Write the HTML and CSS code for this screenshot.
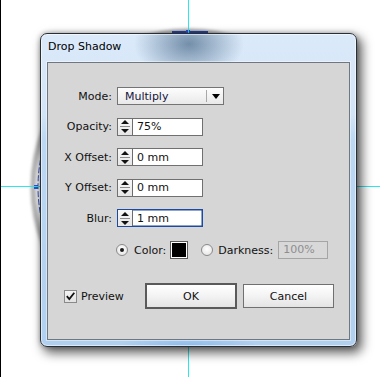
FILE: index.html
```html
<!DOCTYPE html>
<html>
<head>
<meta charset="utf-8">
<link rel="stylesheet" href="styles.css">
</head>
<body>
<div class="stage">
  <svg class="backdrop" width="380" height="377" viewBox="0 0 380 377">
    <defs>
      <filter id="soft" x="-20%" y="-20%" width="140%" height="140%">
        <feGaussianBlur stdDeviation="1.6"/>
      </filter>
    </defs>
    <circle cx="189" cy="187" r="156" fill="none" stroke="#b4b4b4" stroke-width="5" filter="url(#soft)"/>
    <circle cx="189" cy="187" r="151" fill="none" stroke="#2f52d2" stroke-width="1" stroke-dasharray="6 2"/>
    <rect x="172" y="31" width="36" height="2" fill="#2a44a6"/>
    <rect x="186" y="30" width="4" height="4" fill="#2f52d2"/>
    <rect x="34" y="185" width="4" height="4" fill="#2f52d2"/>
    <line x1="188.5" y1="0" x2="188.5" y2="377" stroke="#2ee6ee" stroke-width="1"/>
    <line x1="0" y1="186.5" x2="380" y2="186.5" stroke="#2ee6ee" stroke-width="1"/>
  </svg>

  <div class="dialog">
    <div class="title">Drop Shadow</div>
    <div class="client">
      <div class="fields">
        <span class="lbl">Mode:</span>
        <div class="select">
          <span class="sel-text">Multiply</span>
          <span class="sel-btn"><i class="tri-down"></i></span>
        </div>

        <span class="lbl">Opacity:</span>
        <div class="spin">
          <span class="spin-btns"><i class="up"></i><i class="sep"></i><i class="down"></i></span>
          <span class="val">75%</span>
        </div>

        <span class="lbl">X Offset:</span>
        <div class="spin">
          <span class="spin-btns"><i class="up"></i><i class="sep"></i><i class="down"></i></span>
          <span class="val">0 mm</span>
        </div>

        <span class="lbl">Y Offset:</span>
        <div class="spin">
          <span class="spin-btns"><i class="up"></i><i class="sep"></i><i class="down"></i></span>
          <span class="val">0 mm</span>
        </div>

        <span class="lbl">Blur:</span>
        <div class="spin focus">
          <span class="spin-btns"><i class="up"></i><i class="sep"></i><i class="down"></i></span>
          <span class="val">1 mm</span>
        </div>
      </div>

      <div class="color-row">
        <span class="radio checked"></span>
        <span class="opt-lbl">Color:</span>
        <span class="swatch"></span>
        <span class="radio second"></span>
        <span class="opt-lbl">Darkness:</span>
        <span class="disabled-input">100%</span>
      </div>

      <div class="actions">
        <span class="check">
          <svg width="11" height="11" viewBox="0 0 11 11"><path d="M1.8 5.2 L4.3 8 L9.3 1.8" fill="none" stroke="#111" stroke-width="1.8"/></svg>
        </span>
        <span class="check-lbl">Preview</span>
        <span class="btn ok">OK</span>
        <span class="btn cancel">Cancel</span>
      </div>
    </div>
  </div>
</div>
</body>
</html>
```

FILE: styles.css
```css
* { box-sizing: border-box; }

html, body {
  margin: 0;
  padding: 0;
  background: #fff;
  overflow: hidden;
}

body {
  font-family: "DejaVu Sans", "Liberation Sans", sans-serif;
  font-size: 11px;
  color: #111;
}

.stage {
  position: relative;
  width: 380px;
  height: 377px;
  background: #fff;
  overflow: hidden;
}

.stage::after {
  content: "";
  position: absolute;
  left: 0;
  top: -1px;
  width: 380px;
  height: 378px;
  border: 1px solid #000;
  pointer-events: none;
}

.backdrop {
  position: absolute;
  left: 0;
  top: 0;
}

.dialog {
  position: absolute;
  left: 40px;
  top: 33px;
  width: 317px;
  height: 314px;
  border: 1px solid #2a2f36;
  border-radius: 7px;
  background:
    radial-gradient(ellipse 55px 36px at 148px 10px, rgba(72, 104, 136, 0.7), rgba(72, 104, 136, 0) 100%),
    radial-gradient(ellipse 70px 10px at 148px 100%, rgba(110, 170, 230, 0.55), rgba(110, 170, 230, 0) 100%),
    linear-gradient(to bottom, #dbeafa 0%, #d2e4f7 26%, #bcd8f3 34%, #b1cfef 100%);
  box-shadow:
    inset 0 0 0 1px rgba(255, 255, 255, 0.55),
    0 0 5px rgba(0, 0, 0, 0.3),
    4px 5px 11px 1px rgba(0, 0, 0, 0.62);
  display: flex;
  flex-direction: column;
  padding: 0 6px 6px 6px;
}

.title {
  height: 28px;
  line-height: 26px;
  padding-left: 1px;
  color: #000;
  font-size: 11px;
}

.client {
  flex: 1;
  border: 1px solid #6f7780;
  background: #d6d6d6;
  box-shadow: 0 0 0 1px rgba(255, 255, 255, 0.45);
  padding-top: 24px;
}

.fields {
  display: grid;
  grid-template-columns: 64px auto;
  column-gap: 5px;
  row-gap: 12.5px;
  align-items: center;
  justify-items: start;
}

.lbl {
  justify-self: end;
  white-space: nowrap;
  color: #111;
}

.select {
  width: 107px;
  height: 18px;
  border: 1px solid #747474;
  background: linear-gradient(to bottom, #fdfdfd, #e9e9e9);
  display: flex;
  align-items: center;
}

.sel-text {
  flex: 1;
  padding-left: 7px;
  color: #14143c;
}

.sel-btn {
  width: 17px;
  height: 12px;
  border-left: 1px solid #a8a8a8;
  display: flex;
  align-items: center;
  justify-content: center;
}

.tri-down {
  width: 0;
  height: 0;
  border-left: 4px solid transparent;
  border-right: 4px solid transparent;
  border-top: 5px solid #000;
  margin-left: 1px;
}

.spin {
  width: 86px;
  height: 18px;
  border: 1px solid #707070;
  background: #fff;
  display: flex;
  align-items: center;
}

.spin.focus {
  border-color: #1b4aa0;
  box-shadow: inset 0 0 0 0.5px #1b4aa0;
}

.spin-btns {
  width: 15px;
  height: 16px;
  border-right: 1px solid #6c6c6c;
  background: linear-gradient(to bottom, #f8f8f8, #e6e6e6);
  display: flex;
  flex-direction: column;
  align-items: center;
  justify-content: center;
}

.spin-btns .up,
.spin-btns .down {
  width: 0;
  height: 0;
  border-left: 4px solid transparent;
  border-right: 4px solid transparent;
}

.spin-btns .up {
  border-bottom: 4px solid #111;
}

.spin-btns .down {
  border-top: 4px solid #111;
}

.spin-btns .sep {
  width: 10px;
  height: 1px;
  background: #8c8c8c;
  margin: 2px 0;
}

.val {
  padding-left: 4px;
  color: #111;
}

.color-row {
  display: flex;
  align-items: center;
  margin-top: 14px;
  padding-left: 68px;
  height: 18px;
}

.radio {
  width: 12px;
  height: 12px;
  border-radius: 50%;
  border: 1px solid #8a8a8a;
  background: radial-gradient(circle at 50% 40%, #ffffff, #e0e0e0);
  display: flex;
  align-items: center;
  justify-content: center;
}

.radio.checked::after {
  content: "";
  width: 4px;
  height: 4px;
  border-radius: 50%;
  background: #1a1a1a;
}

.radio.second {
  margin-left: 13px;
}

.opt-lbl {
  margin-left: 6px;
  white-space: nowrap;
}

.radio.second + .opt-lbl {
  margin-left: 5px;
}

.swatch {
  width: 18px;
  height: 18px;
  margin-left: 4px;
  border: 1px solid #5a5a5a;
  background: #000;
  box-shadow: inset 0 0 0 1px #fff;
}

.disabled-input {
  width: 50px;
  height: 18px;
  margin-left: 5px;
  border: 1px solid #a5a5a5;
  background: #d8d8d8;
  color: #8e8e8e;
  padding-left: 4px;
  line-height: 16px;
}

.actions {
  display: flex;
  align-items: center;
  margin-top: 24px;
  padding-left: 16px;
  height: 26px;
}

.check {
  width: 13px;
  height: 13px;
  border: 1px solid #8a8a8a;
  background: linear-gradient(to bottom, #f4f4f4, #e2e2e2);
  display: flex;
  align-items: center;
  justify-content: center;
}

.check-lbl {
  margin-left: 4px;
  width: 64px;
}

.btn {
  display: flex;
  align-items: center;
  justify-content: center;
  background: linear-gradient(to bottom, #ffffff 0%, #f3f3f3 50%, #e4e4e4 100%);
  color: #111;
}

.btn.ok {
  width: 92px;
  height: 26px;
  border: 2px solid #5a5a5a;
}

.btn.cancel {
  width: 91px;
  height: 24px;
  margin-left: 6px;
  border: 1px solid #707070;
}
```
